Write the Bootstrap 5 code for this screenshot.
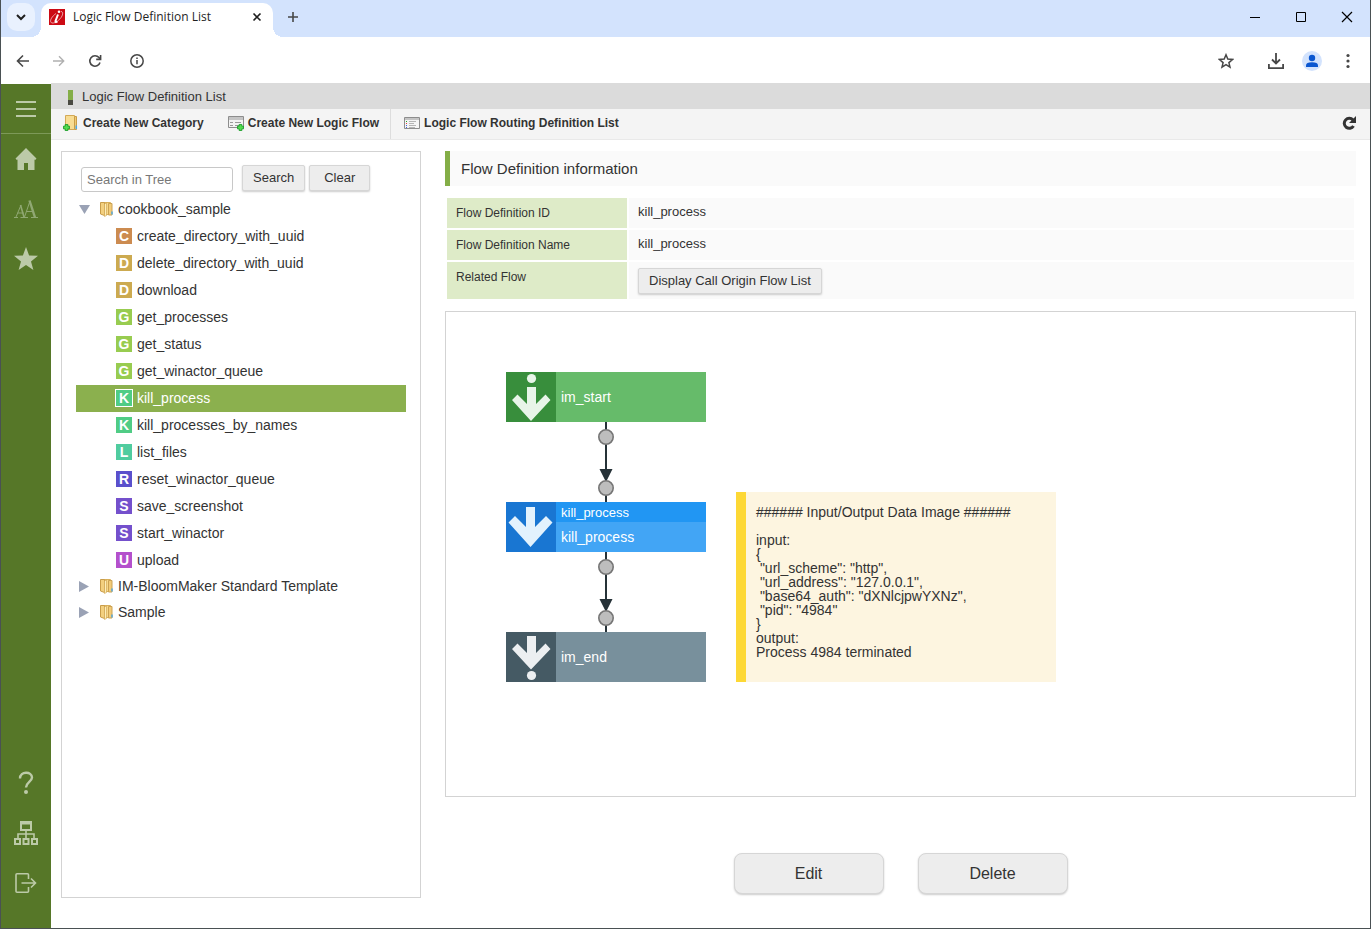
<!DOCTYPE html>
<html lang="en">
<head>
<meta charset="utf-8">
<meta name="viewport" content="width=device-width, initial-scale=1">
<title>Logic Flow Definition List</title>
<link href="https://cdn.jsdelivr.net/npm/bootstrap@5.3.0/dist/css/bootstrap.min.css" rel="stylesheet">
<style>
body { font-family: "Liberation Sans", Arial, sans-serif; font-size: 14px; line-height: 16px; color: #333; background: #fff; border: 1px solid #4a5154; border-top: 0; }
a { color: inherit; text-decoration: none; }
svg { display: block; flex: none; }
.icon-btn { border: 0; background: none; padding: 0; color: inherit; display: flex; align-items: center; justify-content: center; }

/* browser frame */
.tab-strip { background: #d3e3fd; height: 37px; padding: 3px 10px 0 6px; color: #1f1f1f; }
.tab-menu { width: 28px; height: 28px; border-radius: 10px; background: #e9f1fe; }
.page-tab { position: relative; width: 232px; height: 34px; margin: 0 14px 0 6px; padding: 0 10px 6px 8px; background: #fff; border-radius: 10px 10px 0 0; font-family: "Open Sans", sans-serif; font-size: 12px; }
.page-tab::before, .page-tab::after { content: ""; position: absolute; bottom: 0; width: 10px; height: 10px; }
.page-tab::before { right: 100%; background: radial-gradient(circle at 0 0, transparent 10px, #fff 10px); }
.page-tab::after { left: 100%; background: radial-gradient(circle at 100% 0, transparent 10px, #fff 10px); }
.window-keys { gap: 34px; padding: 0 7px 6px 0; }
.address-row { height: 47px; padding: 0 14px 0 15px; color: #474747; }
.nav-keys { gap: 23px; }
.browser-tools { gap: 18px; }
.bookmark-key { margin-right: 16px; }

/* application shell */
.side-nav { width: 50px; background: #567728; color: #bccaa8; padding-bottom: 20px; }
.side-nav .icon-btn { height: 50px; width: 50px; }
.side-nav .menu-key { border-bottom: 1px solid #7d9958; }
.crumb-bar { background: #dbdbdb; height: 26px; padding: 2px 0 0 17px; font-size: 13px; margin-top: -1px; }
.crumb-mark { width: 5px; height: 15px; margin-right: 9px; background: linear-gradient(#84ae47 10px, #4a4a42 10px); }
.tool-bar { background: #f4f4f4; height: 31px; border-bottom: 1px solid #e9e9e9; padding: 0 13px 3px 12px; font-size: 12px; font-weight: 700; }
.tool-bar a { gap: 4px; }
.tool-split { width: 1px; height: 30px; margin: 0 13px 0 11px; background: #ddd; align-self: flex-start; }

.work-area { padding: 11px 14px 0 10px; gap: 24px; }
.tree-panel { width: 360px; flex: none; border: 1px solid #d3d3d3; padding: 13px 14px; margin-bottom: 30px; }
.grey-btn { --bs-btn-bg: #ededed; --bs-btn-color: #333; --bs-btn-border-color: #d6d6d6; --bs-btn-hover-bg: #e2e2e2; --bs-btn-hover-border-color: #ccc; --bs-btn-padding-y: 4px; --bs-btn-padding-x: 10px; --bs-btn-font-size: 13px; --bs-btn-line-height: 16px; --bs-btn-border-radius: 2px; box-shadow: 0 1px 2px #ccc; white-space: nowrap; }
.tree-search { padding-left: 5px; margin-bottom: 5px; }
.tree-search .form-control { width: 152px; height: 25px; margin: 2px 9px 0 0; padding: 0 5px; font-size: 13px; line-height: 16px; border-color: #c8c8c8; border-radius: 3px; }
.tree-search .form-control::placeholder { color: #777; }
.tree-search .grey-btn { height: 26px; }
.tree-search .clear-key { --bs-btn-padding-x: 14px; }
.folder-row { height: 26px; padding: 0 0 2px 3px; }
.folder-row .twisty { width: 11px; margin-right: 9px; }
.folder-row .folder-art { margin-right: 2px; }
.leaf-row { height: 27px; padding: 0 0 2px 40px; gap: 5px; }
.leaf-row.chosen { background: #8bb04e; color: #fff; }
.leaf-row.chosen .initial { outline: 1px solid #fff; }
.initial { width: 16px; height: 16px; color: #fff; font-weight: 700; font-size: 14px; line-height: 17px; text-align: center; }
.tone-c { background: #cc8b50; } .tone-d { background: #ccaa50; } .tone-g { background: #98cc50; } .tone-k { background: #50cc85; }
.tone-l { background: #50cc9f; } .tone-r { background: #5a50cc; } .tone-s { background: #7450cc; } .tone-u { background: #b450cc; }

.section-title { height: 35px; margin: 0; padding-left: 11px; border-left: 5px solid #84ae47; background: #fafafa; font-size: 15px; line-height: 36px; font-weight: 400; }
.info-grid { width: 100%; margin: 10px 0; border-collapse: separate; border-spacing: 2px; font-size: 13px; }
.info-grid th { width: 180px; background: #deebc8; font-weight: 400; font-size: 12px; padding: 7px 9px; vertical-align: top; }
.info-grid td { background: #fafafa; padding: 6px 9px 8px; vertical-align: top; }
.info-grid td.with-btn { padding-bottom: 5px; }

.flow-canvas { position: relative; flex: 1 0 400px; border: 1px solid #d3d3d3; overflow: hidden; }
.flow-canvas > * { position: absolute; }
.flow-links { left: 150px; top: 60px; }
.flow-node { left: 60px; width: 200px; height: 50px; color: #fff; display: flex; }
.flow-node .node-text { flex: 1; display: flex; flex-direction: column; justify-content: center; }
.flow-node span { padding-left: 5px; }
.node-start { top: 60px; background: #66bb6a; } .node-start svg { background: #388e3c; }
.node-task { top: 190px; background: #42a5f5; } .node-task svg { background: #1976d2; }
.node-task .task-kind { background: #2196f3; height: 20px; font-size: 13px; line-height: 21px; }
.node-task .task-name { line-height: 30px; }
.node-end { top: 320px; background: #78909c; } .node-end svg { background: #455a64; }
.flow-note { left: 290px; top: 180px; width: 320px; height: 190px; background: #fdf5e0; border-left: 10px solid #fdd835; padding: 13px 10px; line-height: 14px; white-space: pre-wrap; }
.page-keys { gap: 34px; margin: 56px 0 34px; }
.page-keys .grey-btn { width: 150px; height: 41px; --bs-btn-font-size: 16px; --bs-btn-border-radius: 8px; }
</style>
</head>
<body class="d-flex flex-column min-vh-100">
<svg width="0" height="0" class="position-absolute" aria-hidden="true">
  <symbol id="folder" viewBox="0 0 16 16">
    <path d="M4.500 1.500h7v12h-7z" fill="#f7d88c" stroke="#d9b05a"/>
    <path d="M9.500 2.500h3.500v11.500H9.500z" fill="#f3cc78" stroke="#cba254"/>
    <path d="M1.500 1.500h4v13l-4-1.500z" fill="#f3d07f" stroke="#c99d4b"/>
    <path d="M5.500 3l2-1v12.500l-2 1z" fill="#fdeebb" stroke="#cfa14a" stroke-width=".6"/>
    <path d="M13 10.500v3" stroke="#54a8dc" stroke-width="1.500"/>
  </symbol>
  <symbol id="plus" viewBox="0 0 8 8"><path d="M2.500.5h3v2h2v3h-2v2h-3v-2h-2v-3h2z" fill="#52dc4f" stroke="#159a24"/></symbol>
</svg>

<header>
  <div class="tab-strip d-flex align-items-start">
    <button class="icon-btn tab-menu" aria-label="Search tabs"><svg width="10" height="10" viewBox="0 0 10 10" fill="none" stroke="currentColor" stroke-width="2"><path d="M1 3l4 4 4-4"/></svg></button>
    <div class="page-tab d-flex align-items-center">
      <svg width="16" height="16" viewBox="0 0 16 16"><path fill="#cc0a14" d="M0 0h16v16H0z"/><g fill="none" stroke="#fff"><path d="M9 5.500L6.500 12q-.5 2 2 .5" stroke-width="2"/><path d="M7 4.500C2 8 0 13 3 14c3 .5 8-3 10-7 1.500-3 .5-4.500-1-4.500" stroke-width=".6"/></g><circle cx="10" cy="2.800" r="1.300" fill="#fff"/></svg>
      <span class="ms-2 flex-grow-1 text-nowrap">Logic Flow Definition List</span>
      <button class="icon-btn" aria-label="Close tab"><svg width="12" height="12" viewBox="0 0 12 12" stroke="currentColor" stroke-width="1.600"><path d="M2.500 2.500l7 7m0-7l-7 7"/></svg></button>
    </div>
    <button class="icon-btn mt-2" aria-label="New tab"><svg width="12" height="12" viewBox="0 0 12 12" stroke="#474747" stroke-width="1.600"><path d="M6 1v10M1 6h10"/></svg></button>
    <div class="window-keys d-flex align-items-center ms-auto align-self-stretch">
      <button class="icon-btn" aria-label="Minimize"><svg width="12" height="12" viewBox="0 0 12 12" stroke="#000"><path d="M1 6.500h10"/></svg></button>
      <button class="icon-btn" aria-label="Maximize"><svg width="12" height="12" viewBox="0 0 12 12" stroke="#000" fill="none"><path d="M1.500 1.500h9v9h-9z"/></svg></button>
      <button class="icon-btn" aria-label="Close"><svg width="12" height="12" viewBox="0 0 12 12" stroke="#000" stroke-width="1.200"><path d="M1 1l10 10M11 1L1 11"/></svg></button>
    </div>
  </div>
  <div class="address-row d-flex align-items-center">
    <div class="nav-keys d-flex">
      <button class="icon-btn" aria-label="Back"><svg width="14" height="14" viewBox="0 0 14 14" fill="none" stroke="currentColor" stroke-width="1.600"><path d="M13 7H2M7 1.500L1.500 7 7 12.500"/></svg></button>
      <button class="icon-btn" aria-label="Forward" disabled><svg width="12" height="14" viewBox="0 0 14 14" fill="none" stroke="#b0b0b0" stroke-width="1.600"><path d="M0 7h12M7 1.500L12.500 7 7 12.500"/></svg></button>
      <button class="icon-btn" aria-label="Reload"><svg width="14" height="14" viewBox="0 0 14 14" fill="none" stroke="currentColor" stroke-width="1.600"><path d="M12 8.500A5.200 5.200 0 1 1 11 3.600L12 5"/><path d="M12.600 1v4.400H8.200"/></svg></button>
      <button class="icon-btn ms-1" aria-label="Site information"><svg width="16" height="14" viewBox="-1 0 16 14" fill="none" stroke="currentColor" stroke-width="1.500"><circle cx="7" cy="7" r="6.200"/><path d="M7 6v4.300M7 3.500v1.500"/></svg></button>
    </div>
    <div class="browser-tools d-flex align-items-center ms-auto">
      <button class="icon-btn bookmark-key" aria-label="Bookmark"><svg width="16" height="16" viewBox="0 0 16 16" fill="none" stroke="currentColor" stroke-width="1.500"><path d="M8 1.800l1.800 4.300 4.700.4-3.600 3.100 1.100 4.600L8 11.700l-4 2.500 1.100-4.600-3.600-3.100 4.700-.4z"/></svg></button>
      <button class="icon-btn" aria-label="Downloads"><svg width="16" height="16" viewBox="0 0 16 16" fill="none" stroke="currentColor" stroke-width="1.800"><path d="M8 0v10.500M4 6.500l4 4 4-4M.9 11v4.100h14.200V11"/></svg></button>
      <button class="icon-btn" aria-label="Profile"><svg width="20" height="20" viewBox="0 0 20 20"><circle cx="10" cy="10" r="10" fill="#d3e3fd"/><circle cx="10" cy="7" r="3.200" fill="#0b57d0"/><path d="M4 16v-1.500Q4 11.300 10 11.300t6 3.200V16z" fill="#0b57d0"/></svg></button>
      <button class="icon-btn" aria-label="Menu"><svg width="16" height="16" viewBox="0 0 16 16" fill="currentColor"><circle cx="8" cy="2.500" r="1.600"/><circle cx="8" cy="8" r="1.600"/><circle cx="8" cy="13.500" r="1.600"/></svg></button>
    </div>
  </div>
</header>

<div class="d-flex flex-grow-1">
  <nav class="side-nav d-flex flex-column flex-shrink-0" aria-label="Main">
    <button class="icon-btn menu-key" aria-label="Menu"><svg width="20" height="18" viewBox="0 0 20 18" fill="currentColor"><path d="M0 1h20v2H0zM0 8h20v2H0zM0 15h20v2H0z"/></svg></button>
    <a class="icon-btn" href="#" aria-label="Home"><svg width="22" height="24" viewBox="0 0 22 24" fill="currentColor"><path d="M11 1l10.500 10.500-1.300 1.500-.7-.5V23h-6.500v-7h-4v7H2.500V12.500l-.7.5-1.300-1.500z"/></svg></a>
    <a class="icon-btn" href="#" aria-label="Text size"><svg width="24" height="20" viewBox="0 0 24 20" fill="none" stroke="#90a873"><path d="M0 18.500h4M6.500 18.500h5M2 18L7 6M3.500 14h6"/><path d="M9 18.500h5M17 18.500h7M10.500 18L16 2"/><path d="M15.500 1.500l5.500 17" stroke-width="2.400"/><path d="M12.500 12.500h7"/><path d="M6.500 6l3.500 12" stroke-width="1.600"/></svg></a>
    <a class="icon-btn" href="#" aria-label="Favorites"><svg width="24" height="24" viewBox="0 0 24 24" fill="currentColor"><path d="M12 0l3.100 8.500 8.900.3-7 5.600 2.400 8.600L12 18l-7.400 5L7 14.400 0 8.800l8.900-.3z"/></svg></a>
    <a class="icon-btn mt-auto" href="#" aria-label="Help"><svg width="16" height="24" viewBox="0 0 16 24" fill="none" stroke="currentColor" stroke-width="2.400"><path d="M2 7.500C2 0 14 0 14 6.500c0 4-6 5-6 10"/><circle cx="8" cy="21" r="2" fill="currentColor" stroke="none"/></svg></a>
    <a class="icon-btn" href="#" aria-label="Site map"><svg width="24" height="24" viewBox="0 0 24 24" fill="none" stroke="currentColor" stroke-width="2"><path d="M7 1h10v8H7z"/><path d="M7 2.500h10"/><path d="M12 9v9M4 17v-4h16v4" stroke-width="1.600"/><path d="M1 18h5v5H1zM9.500 18h5v5h-5zM18 18h5v5h-5z"/></svg></a>
    <a class="icon-btn" href="#" aria-label="Log out"><svg width="22" height="20" viewBox="0 0 22 20" fill="none" stroke="currentColor" stroke-width="1.600"><path d="M13.500 6V1.800q0-1-1-1H2q-1 0-1 1v16.400q0 1 1 1h10.500q1 0 1-1V14M6.500 10H20M16 5.500l4.500 4.500-4.500 4.500"/></svg></a>
  </nav>

  <div class="d-flex flex-column flex-grow-1">
    <div class="crumb-bar d-flex align-items-center"><span class="crumb-mark"></span>Logic Flow Definition List</div>
    <div class="tool-bar d-flex align-items-center">
      <a href="#" class="d-flex align-items-center"><svg width="16" height="16" viewBox="0 0 16 16"><path d="M2.500.5h9v14h-9z" fill="#f8dc92" stroke="#d3a956"/><path d="M11.500 1.500h2v13h-2z" fill="#f1ca73" stroke="#c99d48"/><path d="M13.300 10.500v3.500" stroke="#4aa7e8" stroke-width="1.500"/><use href="#plus" x="0" y="9" width="7" height="7"/></svg>Create New Category</a>
      <a href="#" class="d-flex align-items-center ms-4"><svg width="16" height="16" viewBox="0 0 16 16"><path d="M.5 1.500h15v11H.5z" fill="#f3f3f3" stroke="#8d8d8d"/><path d="M1 2h14v3H1z" fill="#c5c5c5"/><path d="M2 7.500h3M7 7.500h6M2 10.500h3M7 10.500h4" stroke="#999"/><use href="#plus" x="9" y="9" width="7" height="7"/></svg>Create New Logic Flow</a>
      <span class="tool-split"></span>
      <a href="#" class="d-flex align-items-center"><svg width="16" height="16" viewBox="0 0 16 16"><path d="M.5 2.500h15v11H.5z" fill="#f5f5f5" stroke="#8d8d8d"/><path d="M1 3h14v2H1z" fill="#c5c5c5"/><path d="M5 6.500h7M5 8.500h5M5 10.500h7M5 12.500h6" stroke="#b5b5b5"/><path d="M2 6.500h1" stroke="#2a2"/><path d="M2 8.500h1" stroke="#d44"/><path d="M2 10.500h1M2 12.500h1" stroke="#46d"/></svg>Logic Flow Routing Definition List</a>
      <button class="icon-btn ms-auto" aria-label="Refresh"><svg width="15" height="14" viewBox="0 0 15 14" fill="none" stroke="#333" stroke-width="3"><path d="M11.500 10A5 5 0 1 1 11 4"/><path d="M14 0v7H7z" fill="#333" stroke="none"/></svg></button>
    </div>

    <div class="work-area d-flex flex-grow-1">
      <aside class="tree-panel">
        <form class="tree-search d-flex align-items-start">
          <input class="form-control" type="text" placeholder="Search in Tree" aria-label="Search in Tree">
          <button type="button" class="btn grey-btn me-1">Search</button>
          <button type="reset" class="btn grey-btn clear-key">Clear</button>
        </form>
        <ul class="list-unstyled m-0">
          <li><a href="#" class="folder-row d-flex align-items-center"><svg class="twisty" width="11" height="10" viewBox="0 0 11 10"><path d="M0 1h11L5.500 10z" fill="#9aa2b5"/></svg><svg class="folder-art" width="17" height="16"><use href="#folder" width="16" height="16"/></svg>cookbook_sample</a>
            <ul class="list-unstyled m-0">
              <li><a href="#" class="leaf-row d-flex align-items-center"><span class="initial tone-c">C</span>create_directory_with_uuid</a></li>
              <li><a href="#" class="leaf-row d-flex align-items-center"><span class="initial tone-d">D</span>delete_directory_with_uuid</a></li>
              <li><a href="#" class="leaf-row d-flex align-items-center"><span class="initial tone-d">D</span>download</a></li>
              <li><a href="#" class="leaf-row d-flex align-items-center"><span class="initial tone-g">G</span>get_processes</a></li>
              <li><a href="#" class="leaf-row d-flex align-items-center"><span class="initial tone-g">G</span>get_status</a></li>
              <li><a href="#" class="leaf-row d-flex align-items-center"><span class="initial tone-g">G</span>get_winactor_queue</a></li>
              <li><a href="#" class="leaf-row chosen d-flex align-items-center" aria-current="true"><span class="initial tone-k">K</span>kill_process</a></li>
              <li><a href="#" class="leaf-row d-flex align-items-center"><span class="initial tone-k">K</span>kill_processes_by_names</a></li>
              <li><a href="#" class="leaf-row d-flex align-items-center"><span class="initial tone-l">L</span>list_files</a></li>
              <li><a href="#" class="leaf-row d-flex align-items-center"><span class="initial tone-r">R</span>reset_winactor_queue</a></li>
              <li><a href="#" class="leaf-row d-flex align-items-center"><span class="initial tone-s">S</span>save_screenshot</a></li>
              <li><a href="#" class="leaf-row d-flex align-items-center"><span class="initial tone-s">S</span>start_winactor</a></li>
              <li><a href="#" class="leaf-row d-flex align-items-center"><span class="initial tone-u">U</span>upload</a></li>
            </ul>
          </li>
          <li><a href="#" class="folder-row d-flex align-items-center"><svg class="twisty" width="11" height="11" viewBox="0 0 11 11"><path d="M0 0l10 5.500L0 11z" fill="#9aa2b5"/></svg><svg class="folder-art" width="17" height="16"><use href="#folder" width="16" height="16"/></svg>IM-BloomMaker Standard Template</a></li>
          <li><a href="#" class="folder-row d-flex align-items-center"><svg class="twisty" width="11" height="11" viewBox="0 0 11 11"><path d="M0 0l10 5.500L0 11z" fill="#9aa2b5"/></svg><svg class="folder-art" width="17" height="16"><use href="#folder" width="16" height="16"/></svg>Sample</a></li>
        </ul>
      </aside>

      <main class="d-flex flex-column flex-grow-1">
        <h2 class="section-title">Flow Definition information</h2>
        <table class="info-grid">
          <tr><th scope="row">Flow Definition ID</th><td>kill_process</td></tr>
          <tr><th scope="row">Flow Definition Name</th><td>kill_process</td></tr>
          <tr><th scope="row">Related Flow</th><td class="with-btn"><button type="button" class="btn grey-btn">Display Call Origin Flow List</button></td></tr>
        </table>
        <div class="flow-canvas">
          <svg class="flow-links" width="20" height="340" viewBox="0 0 20 340">
            <g stroke="#263238" stroke-width="2"><path d="M10 50v80M10 180v80"/></g>
            <path d="M3.500 97h13L10 110zM3.500 227h13L10 240z" fill="#263238"/>
            <g fill="#bdbdbd" stroke="#757575" stroke-width="1.600"><circle cx="10" cy="65" r="7.200"/><circle cx="10" cy="116" r="7.200"/><circle cx="10" cy="195" r="7.200"/><circle cx="10" cy="246" r="7.200"/></g>
          </svg>
          <div class="flow-node node-start"><svg width="50" height="50" viewBox="0 0 50 50" fill="#e8f5e9"><circle cx="25.500" cy="6.500" r="4.600"/><path d="M21 15h9v17l9.500-9.500 5 5.500-19.500 21L6 28l5.500-5.500L21 32z"/></svg><div class="node-text"><span>im_start</span></div></div>
          <div class="flow-node node-task"><svg width="50" height="50" viewBox="0 0 50 50" fill="#e3f2fd"><path d="M20 5h9v20l11-11 6.500 6.500L24.500 45 2.500 20.500 9 14l11 11z"/></svg><div class="node-text"><span class="task-kind">kill_process</span><span class="task-name">kill_process</span></div></div>
          <div class="flow-node node-end"><svg width="50" height="50" viewBox="0 0 50 50" fill="#eceff1"><path d="M21 4h9v17l9.500-9.500 5 5.500L25 37.500 6 17l5.500-5.500L21 21z"/><circle cx="25.500" cy="43.500" r="4.600"/></svg><div class="node-text"><span>im_end</span></div></div>
          <div class="flow-note">###### Input/Output Data Image ######

input:
{
 "url_scheme": "http",
 "url_address": "127.0.0.1",
 "base64_auth": "dXNlcjpwYXNz",
 "pid": "4984"
}
output:
Process 4984 terminated</div>
        </div>
        <div class="page-keys d-flex justify-content-center">
          <button type="button" class="btn grey-btn">Edit</button>
          <button type="button" class="btn grey-btn">Delete</button>
        </div>
      </main>
    </div>
  </div>
</div>
<script src="https://cdn.jsdelivr.net/npm/bootstrap@5.3.0/dist/js/bootstrap.bundle.min.js"></script>
</body>
</html>
